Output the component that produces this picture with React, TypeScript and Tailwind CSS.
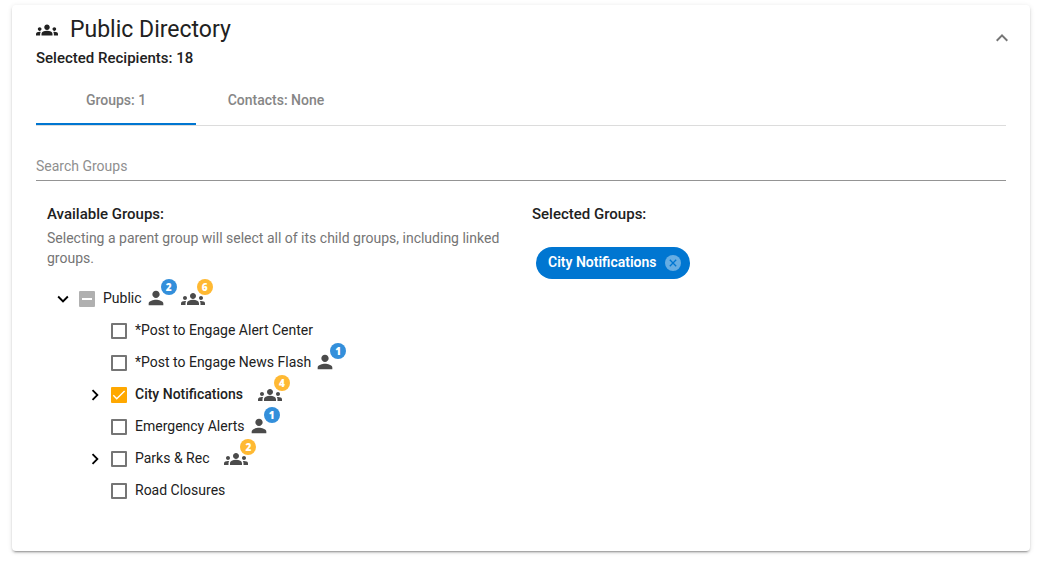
import { useEffect, useRef, useState } from 'react';
import { MdGroups, MdPerson, MdExpandMore, MdChevronRight, MdExpandLess } from 'react-icons/md';

type Group = {
  id: string;
  name: string;
  contacts?: number;
  subgroups?: number;
  checked?: boolean;
  partial?: boolean;
  expandable?: boolean;
};

const CHILD_GROUPS: Group[] = [
  { id: 'alert-center', name: '*Post to Engage Alert Center' },
  { id: 'news-flash', name: '*Post to Engage News Flash', contacts: 1 },
  { id: 'city', name: 'City Notifications', subgroups: 4, checked: true, expandable: true },
  { id: 'emergency', name: 'Emergency Alerts', contacts: 1 },
  { id: 'parks', name: 'Parks & Rec', subgroups: 2, expandable: true },
  { id: 'road', name: 'Road Closures' },
];

function CountIcon({ kind, count }: { kind: 'contacts' | 'subgroups'; count: number }) {
  const isContacts = kind === 'contacts';
  return (
    <span className={`relative block size-6 text-[#4b4b4b] ${isContacts ? '' : 'ml-3'}`}>
      {isContacts ? <MdPerson className="size-[22px]" /> : <MdGroups className="size-6" />}
      <span
        className={`absolute -top-2 left-4 flex size-4 items-center justify-center rounded-full font-['Open_Sans',sans-serif] text-[10px] leading-4 font-extrabold text-white ${
          isContacts ? 'bg-[#338fdb]' : 'bg-[#ffb933]'
        }`}
      >
        {count}
      </span>
    </span>
  );
}

function GroupRow({ group, open = false }: { group: Group; open?: boolean }) {
  const [checked, setChecked] = useState(!!group.checked);
  const [partial, setPartial] = useState(!!group.partial);
  const inputRef = useRef<HTMLInputElement>(null);

  useEffect(() => {
    if (inputRef.current) inputRef.current.indeterminate = partial;
  }, [partial]);

  const boxStyle = partial
    ? 'bg-[#b0b0b0]'
    : checked
      ? 'bg-[#ffa800]'
      : 'border-2 border-[#757575] bg-white';

  return (
    <div className="flex h-8 items-center">
      <div className="flex w-8 justify-center">
        {group.expandable && (
          <button type="button" aria-label={`Toggle ${group.name}`} aria-expanded={open} className="text-black">
            {open ? <MdExpandMore className="size-[22px]" /> : <MdChevronRight className="size-[22px]" />}
          </button>
        )}
      </div>
      <span className="grid size-4">
        <input
          ref={inputRef}
          id={group.id}
          type="checkbox"
          checked={checked}
          onChange={(e) => {
            setPartial(false);
            setChecked(e.target.checked);
          }}
          className={`col-start-1 row-start-1 size-4 appearance-none rounded-[1px] ${boxStyle}`}
        />
        {(partial || checked) && (
          <svg className="pointer-events-none col-start-1 row-start-1 size-4" viewBox="0 0 16 16" fill="none" stroke="white">
            {partial ? <path strokeWidth={2} d="M3 8h10" /> : <path strokeWidth={1.4} d="M2.3 8.3l3.4 3.5L13.6 4" />}
          </svg>
        )}
      </span>
      <label
        htmlFor={group.id}
        className={`mr-[3px] pb-0.5 pl-2 text-sm ${checked ? 'font-medium' : ''}`}
      >
        {group.name}
      </label>
      {group.contacts && <CountIcon kind="contacts" count={group.contacts} />}
      {group.subgroups && <CountIcon kind="subgroups" count={group.subgroups} />}
    </div>
  );
}

export default function App() {
  const [tab, setTab] = useState('groups');
  const tabClass = 'w-40 border-b-2 pb-0.5 text-sm font-medium text-[#868686]';

  return (
    <div className="min-h-screen bg-white pt-[5px] pr-[13px] pl-3 font-[Roboto,sans-serif] text-[#212121]">
      <section className="rounded bg-white px-6 pt-[9px] pb-11 shadow-[0_3px_1px_-2px_rgba(0,0,0,0.2),0_2px_2px_0_rgba(0,0,0,0.14),0_1px_5px_0_rgba(0,0,0,0.12)]">
        <header className="flex items-start justify-between">
          <div>
            <h1 className="flex items-center gap-3 text-[23px] leading-8">
              <MdGroups className="size-[22px]" />
              Public Directory
            </h1>
            <p className="text-[15px] leading-6 font-medium">Selected Recipients: 18</p>
          </div>
          <button type="button" aria-label="Collapse" className="mt-3 -mr-2 text-[#757575]">
            <MdExpandLess className="size-6" />
          </button>
        </header>

        <div role="tablist" className="mt-2 flex h-12 border-b border-[#dcdcdc]">
          <button
            type="button"
            role="tab"
            aria-selected={tab === 'groups'}
            onClick={() => setTab('groups')}
            className={`${tabClass} ${tab === 'groups' ? 'border-[#0076d1]' : 'border-transparent'}`}
          >
            Groups: 1
          </button>
          <button
            type="button"
            role="tab"
            aria-selected={tab === 'contacts'}
            onClick={() => setTab('contacts')}
            className={`${tabClass} ${tab === 'contacts' ? 'border-[#0076d1]' : 'border-transparent'}`}
          >
            Contacts: None
          </button>
        </div>

        <input
          type="search"
          aria-label="Search Groups"
          placeholder="Search Groups"
          className="mt-6 block h-[31px] w-full border-b border-[#949494] pt-0.5 text-sm outline-none placeholder:text-[#8f8f8f]"
        />

        <div className="grid grid-cols-2 pt-[21px]">
          <div className="px-[11px]">
            <h2 className="text-[15px] leading-6 font-medium">Available Groups:</h2>
            <p className="mt-0.5 text-sm leading-5 text-[#757575]">
              Selecting a parent group will select all of its child groups, including linked groups.
            </p>
            <div className="mt-[15px]">
              <GroupRow group={{ id: 'public', name: 'Public', contacts: 2, subgroups: 6, partial: true, expandable: true }} open />
              <div className="pl-8">
                {CHILD_GROUPS.map((group) => (
                  <GroupRow key={group.id} group={group} />
                ))}
              </div>
            </div>
          </div>

          <div className="px-[11px]">
            <h2 className="text-[15px] leading-6 font-medium">Selected Groups:</h2>
            <div className="mt-[21px] ml-1 inline-flex h-8 items-center gap-2 rounded-full bg-[#0076d1] pr-[9px] pl-3 text-sm font-semibold text-white">
              <span className="pb-0.5">City Notifications</span>
              <button type="button" aria-label="Remove City Notifications" className="text-[#0076d1]">
                <svg className="size-4" viewBox="0 0 16 16" fill="none" stroke="currentColor">
                  <circle cx="8" cy="8" r="8" fill="#66ade3" stroke="none" />
                  <path strokeWidth={1.3} d="M4.8 4.8l6.4 6.4M11.2 4.8l-6.4 6.4" />
                </svg>
              </button>
            </div>
          </div>
        </div>
      </section>
    </div>
  );
}
